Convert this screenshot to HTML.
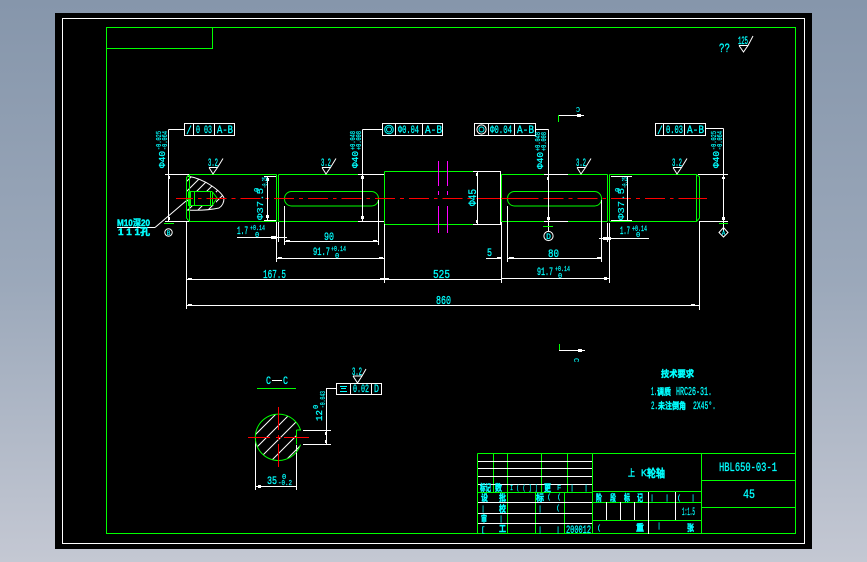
<!DOCTYPE html>
<html><head><meta charset="utf-8"><style>
html,body{margin:0;padding:0;width:867px;height:562px;overflow:hidden;background:#8a99ad}
svg{display:block;position:absolute;left:0;top:0}
.l{fill:none;stroke-width:1;shape-rendering:crispEdges}
.a{fill:none;stroke-width:1}
.w{stroke:#fff}.g{stroke:#00ff00}.r{stroke:#ff0000}.m{stroke:#ff00ff}.c{stroke:#00ffff}
text{fill:#00ffff;stroke:#00ffff;stroke-width:.3;font-family:"Liberation Mono","Noto Sans CJK SC",monospace;font-size:11px}
.b{font-family:"Liberation Sans","Noto Sans CJK SC",sans-serif;font-weight:bold;font-size:9px;stroke-width:.4}
.s{font-size:7px;stroke-width:.2}
</style></head><body>
<svg width="867" height="562" viewBox="0 0 867 562" xmlns="http://www.w3.org/2000/svg">
<defs>
<linearGradient id="bg" x1="0" y1="0" x2="0" y2="1"><stop offset="0" stop-color="#8696ab"/><stop offset="0.5" stop-color="#9ba8ba"/><stop offset="1" stop-color="#c4c8d3"/></linearGradient>
<clipPath id="hc"><path d="M187,176 Q200,178 212,186 Q222,193 224,198 Q224,205 219,208 Q205,211 187,210 Z"/></clipPath>
<clipPath id="cc"><path d="M300.5,430 A23.2,23.2 0 1 0 300.5,444.6 L296.5,444.6 V430 Z"/></clipPath>
</defs>
<rect width="867" height="562" fill="url(#bg)"/>
<rect x="55" y="13" width="757" height="536" fill="#000"/>
<rect x="62.5" y="18.5" width="742" height="525" class="l w"/>
<rect x="106.5" y="27.5" width="689" height="506" class="l g"/>
<path class="l g" d="M106.5,48.5H212.5V27.5"/>

<!-- hatch -->
<g clip-path="url(#hc)" class="a w">
<path d="M180,188L240,128M180,198L240,138M180,208L240,148M180,218L240,158M180,228L240,168M180,238L240,178M180,248L240,188"/>
</g>
<rect x="190" y="192" width="26" height="13" fill="#000"/>
<path class="a w" d="M187,176 Q200,178 212,186 Q222,193 224,198 Q224,205 219,208 Q205,211 187,210"/>

<!-- shaft green -->
<g class="l g">
<path d="M186.5,177.5L189.5,174.5H276.5M186.5,177V218L189,221.5H276.5M189.5,174.5V221.5M276.5,174.5V221.5M278.5,174.5V221.5M278.5,174.5H358M278.5,221.5H358"/>
<path d="M384.5,171.5H473M384.5,224.5H473M384.5,171.5V224.5M501.5,174.5V221.5M501.5,174.5H544M568,174.5H607.5M501.5,221.5H544M568,221.5H607.5M607.5,174.5V221.5M609.5,174.5V221.5M609.5,174.5H696.5M609.5,221.5H696.5M696.5,174.5V221.5"/>
<path d="M188.5,191.5V206M190.5,191.5V206M194.5,192V205M190,191.5H212M190,205.5H212M210.5,191.5V205.5M212.5,191.5V205.5"/>
</g>
<path class="a g" d="M212.5,192L217,198L212.5,205"/>
<path class="a g" d="M696.5,174.5L699.5,177V218L696.5,221.5"/>
<rect x="284.5" y="191.5" width="94" height="14.5" rx="7" class="a g"/>
<rect x="507.5" y="191.5" width="94" height="14.5" rx="7" class="a g"/>

<!-- centre line -->
<path class="l r" d="M176,198.5H708" stroke-dasharray="20 5 3.7 5" stroke-dashoffset="3"/>
<path class="l r" d="M481,198.5H537M683,198.5H707"/>
<path class="l m" d="M438.5,161V186M438.5,191V195M438.5,206V233M447.5,161V186M447.5,191V195M447.5,206V233"/>

<!-- white dims -->
<g class="l w">
<path d="M165,174.5H189M165,221.5H189M168.5,129.5V221M184,129.5H168.5"/>
<path d="M264,176.5H276M264,220.5H276M267.5,176V220"/>
<path d="M358,174.5H384M358,221.5H384M362.5,129.5V221M382,129.5H362.5"/>
<path d="M473,171.5H500.5V224.5H473M477.5,172V224"/>
<path d="M544,174.5H568M544,221.5H568M548.5,129.5V226M535.5,129.5H548.5"/>
<path d="M611,176.5H632M611,220.5H632M627.5,176V220"/>
<path d="M698,174.5H728M699,221.5H728M723.5,128.5V232M705.5,128.5H723.5"/>
<path d="M186.5,221V309M276.5,222V262M278.5,222V242M284.5,206V245M378.5,200V245M384.5,224V283M501.5,222V283M507.5,206V262M601.5,200V262M607.5,223V242M609.5,223V283M699.5,222V310"/>
<path d="M284,241.5H378M237,237.5H287M276,258.5H384M186,279.5H384M186,305.5H699M384,279.5H501M486,258.5H501M507,258.5H601M501,278.5H609M599,238.5H649"/>
<path d="M558,115.5H584M559,350.5H585"/>
<path d="M117,227.5H155"/>
<!-- tolerance boxes -->
<rect x="184.5" y="123.5" width="50" height="12"/><path d="M193.5,124V135M214.5,124V135"/>
<rect x="382.5" y="123.5" width="60" height="12"/><path d="M395.5,124V135M422.5,124V135"/>
<rect x="474.5" y="123.5" width="61" height="12"/><path d="M488.5,124V135M514.5,124V135"/>
<rect x="655.5" y="123.5" width="50" height="12"/><path d="M663.5,124V135M684.5,124V135"/>
<rect x="336.5" y="383.5" width="45" height="11"/><path d="M350.5,384V394M371.5,384V394"/>
<path d="M336,388.5H326.5V444M303,430.5H331M303,444.5H331M255.5,438V490M296.5,445V490M255,486.5H297"/>
</g>
<path class="l c" d="M341,388.5H346M340,386.5H347M340,391.5H347"/>
<!-- dim ticks -->
<g fill="#fff">
<rect x="168" y="176" width="2" height="3"/><rect x="168" y="217" width="2" height="3"/>
<rect x="266" y="178" width="3" height="3"/><rect x="266" y="215" width="3" height="3"/>
<rect x="286" y="240" width="4" height="2"/><rect x="373" y="240" width="4" height="2"/>
<rect x="278" y="257" width="4" height="2"/><rect x="379" y="257" width="4" height="2"/>
<rect x="188" y="278" width="4" height="2"/><rect x="380" y="278" width="4" height="2"/>
<rect x="188" y="304" width="4" height="2"/><rect x="691" y="304" width="4" height="2"/>
<rect x="271" y="236" width="6" height="3"/><rect x="384" y="278" width="5" height="2"/><rect x="497" y="257" width="5" height="2"/>
<rect x="509" y="257" width="5" height="2"/><rect x="597" y="257" width="4" height="2"/><rect x="604" y="277" width="3" height="3"/>
<rect x="603" y="237" width="8" height="3"/><rect x="577" y="114" width="4" height="3"/><rect x="578" y="349" width="4" height="3"/>
<rect x="547" y="177" width="2" height="3"/><rect x="547" y="217" width="3" height="3"/><rect x="361" y="176" width="3" height="3"/><rect x="361" y="216" width="3" height="3"/>
<rect x="476" y="173" width="2" height="3"/><rect x="476" y="220" width="2" height="3"/>
<rect x="722" y="177" width="3" height="2"/><rect x="722" y="217" width="3" height="3"/>
<rect x="325" y="432" width="2" height="3"/><rect x="325" y="440" width="2" height="3"/><rect x="258" y="485" width="3" height="3"/>
</g>
<path class="a w" d="M155,227.5L186,201"/>
<path class="l g" d="M558.5,115V122M559.5,344V350M164,223.5H174M543,226.5H553M719,223.5H728M257,388.5H296"/>

<!-- datum marks -->
<g class="a w">
<circle cx="168.5" cy="232.5" r="3.7"/><circle cx="548.5" cy="236" r="4.6"/>
<path d="M548.5,227V231M723.5,227V232"/>
<path d="M719,232.5L723.5,227.5L728,232.5L723.5,237Z"/>
<circle cx="481.5" cy="129.5" r="4.6"/>
</g>
<g class="a c">
<circle cx="389" cy="129.5" r="4.3"/><circle cx="389" cy="129.5" r="2.5"/>
<circle cx="481.5" cy="129.5" r="2.5"/>
<path d="M191,125.5L187,134M662,125.5L658,134"/>
</g>

<!-- roughness -->
<g class="a w">
<path d="M209,167.5H217.5L213,174L209,167.5M217.5,167.5L223,158.5"/>
<path d="M322,167.5H330.5L326,174L322,167.5M330.5,167.5L336,158.5"/>
<path d="M577,167.5H585.5L581,174L577,167.5M585.5,167.5L591,158.5"/>
<path d="M673,167.5H681.5L677,174L673,167.5M681.5,167.5L687,158.5"/>
<path d="M739,45.5H748L743.5,52L739,45.5M748,45.5L753,36"/>
<path d="M353,376H362L357.5,383L353,376M362,376L366,369"/>
</g>

<!-- section circle -->
<g clip-path="url(#cc)" class="a w">
<path d="M250,428L310,368M250,440L310,380M250,454L310,394M250,468L310,408M250,482L310,422M250,496L310,436"/>
</g>
<path class="a g" d="M300.5,430 A23.2,23.2 0 1 0 300.5,444.6"/>
<path class="l g" d="M296.5,430V444.5M296.5,430H301"/>
<path class="l r" d="M248,437.5H270M276,437.5H281M284,437.5H309M278.5,407V430M278.5,435V440M278.5,444V467"/>

<!-- dimension text -->
<text x="208" y="166" textLength="10" lengthAdjust="spacingAndGlyphs">3.2</text>
<text x="321" y="166" textLength="10" lengthAdjust="spacingAndGlyphs">3.2</text>
<text x="576" y="166" textLength="10" lengthAdjust="spacingAndGlyphs">3.2</text>
<text x="672" y="166" textLength="10" lengthAdjust="spacingAndGlyphs">3.2</text>
<text x="738" y="44" textLength="10" lengthAdjust="spacingAndGlyphs">125</text>
<text x="719" y="52" textLength="11" lengthAdjust="spacingAndGlyphs" style="font-size:13px">??</text>
<text x="352" y="375" textLength="10" lengthAdjust="spacingAndGlyphs">3.2</text>

<text x="196" y="133" textLength="16" lengthAdjust="spacingAndGlyphs">0 03</text>
<text x="217" y="133" textLength="16" lengthAdjust="spacingAndGlyphs">A-B</text>
<text x="398" y="133" textLength="21" lengthAdjust="spacingAndGlyphs">Φ0.04</text>
<text x="425" y="133" textLength="17" lengthAdjust="spacingAndGlyphs">A-B</text>
<text x="490" y="133" textLength="22" lengthAdjust="spacingAndGlyphs">Φ0.04</text>
<text x="517" y="133" textLength="17" lengthAdjust="spacingAndGlyphs">A-B</text>
<text x="666" y="133" textLength="17" lengthAdjust="spacingAndGlyphs">0.03</text>
<text x="687" y="133" textLength="17" lengthAdjust="spacingAndGlyphs">A-B</text>
<text x="353" y="392" textLength="16" lengthAdjust="spacingAndGlyphs">0.02</text>
<text x="374" y="392" textLength="5" lengthAdjust="spacingAndGlyphs">D</text>

<text transform="translate(165,168) rotate(-90)" textLength="17" lengthAdjust="spacingAndGlyphs" style="font-size:9px">Φ40</text>
<text class="s" transform="translate(161,150) rotate(-90)" textLength="19" lengthAdjust="spacingAndGlyphs">-0.025</text>
<text class="s" transform="translate(167,150) rotate(-90)" textLength="19" lengthAdjust="spacingAndGlyphs">-0.064</text>
<text transform="translate(358,168) rotate(-90)" textLength="17" lengthAdjust="spacingAndGlyphs" style="font-size:9px">Φ40</text>
<text class="s" transform="translate(355,150) rotate(-90)" textLength="19" lengthAdjust="spacingAndGlyphs">+0.048</text>
<text class="s" transform="translate(361,150) rotate(-90)" textLength="19" lengthAdjust="spacingAndGlyphs">+0.008</text>
<text transform="translate(543,169) rotate(-90)" textLength="17" lengthAdjust="spacingAndGlyphs" style="font-size:9px">Φ40</text>
<text class="s" transform="translate(540,151) rotate(-90)" textLength="19" lengthAdjust="spacingAndGlyphs">+0.048</text>
<text class="s" transform="translate(546,151) rotate(-90)" textLength="19" lengthAdjust="spacingAndGlyphs">+0.008</text>
<text transform="translate(719,168) rotate(-90)" textLength="17" lengthAdjust="spacingAndGlyphs" style="font-size:9px">Φ40</text>
<text class="s" transform="translate(716,150) rotate(-90)" textLength="19" lengthAdjust="spacingAndGlyphs">-0.025</text>
<text class="s" transform="translate(722,150) rotate(-90)" textLength="19" lengthAdjust="spacingAndGlyphs">-0.064</text>

<text transform="translate(263,220) rotate(-90)" textLength="32" lengthAdjust="spacingAndGlyphs" style="font-size:9px;stroke-width:.15">Φ37.5</text>
<text class="s" transform="translate(259,192) rotate(-90)">0</text>
<text class="s" transform="translate(267,188) rotate(-90)" textLength="11" lengthAdjust="spacingAndGlyphs">-0.25</text>
<text transform="translate(624,220) rotate(-90)" textLength="32" lengthAdjust="spacingAndGlyphs" style="font-size:9px;stroke-width:.15">Φ37.5</text>
<text class="s" transform="translate(620,192) rotate(-90)">0</text>
<text class="s" transform="translate(627,188) rotate(-90)" textLength="11" lengthAdjust="spacingAndGlyphs">-0.25</text>
<text transform="translate(476,206) rotate(-90)" textLength="17" lengthAdjust="spacingAndGlyphs">Φ45</text>
<text transform="translate(322,421) rotate(-90)" textLength="11" lengthAdjust="spacingAndGlyphs" style="font-size:9px">12</text>
<text class="s" transform="translate(318,409) rotate(-90)">0</text>
<text class="s" transform="translate(325,408) rotate(-90)" textLength="17" lengthAdjust="spacingAndGlyphs">-0.043</text>
<text transform="translate(580,107) rotate(180)" style="font-size:7px;stroke-width:.1">C</text>
<text transform="translate(574,358) rotate(90)" style="font-size:7px;stroke-width:.1">C</text>

<text x="237" y="234" textLength="11" lengthAdjust="spacingAndGlyphs">1.7</text>
<text class="s" x="250" y="230" textLength="15" lengthAdjust="spacingAndGlyphs">+0.14</text>
<text class="s" x="255" y="237">0</text>
<text x="324" y="240" textLength="10" lengthAdjust="spacingAndGlyphs">90</text>
<text x="313" y="255" textLength="17" lengthAdjust="spacingAndGlyphs">91.7</text>
<text class="s" x="331" y="251" textLength="15" lengthAdjust="spacingAndGlyphs">+0.14</text>
<text class="s" x="335" y="258">0</text>
<text x="263" y="278" textLength="23" lengthAdjust="spacingAndGlyphs" style="font-size:12px">167.5</text>
<text x="433" y="278" textLength="17" lengthAdjust="spacingAndGlyphs" style="font-size:12px">525</text>
<text x="436" y="304" textLength="15" lengthAdjust="spacingAndGlyphs" style="font-size:12px">860</text>
<text x="487" y="256" textLength="5" lengthAdjust="spacingAndGlyphs">5</text>
<text x="548" y="257" textLength="11" lengthAdjust="spacingAndGlyphs">80</text>
<text x="537" y="275" textLength="16" lengthAdjust="spacingAndGlyphs">91.7</text>
<text class="s" x="555" y="271" textLength="15" lengthAdjust="spacingAndGlyphs">+0.14</text>
<text class="s" x="558" y="278">0</text>
<text x="620" y="234" textLength="10" lengthAdjust="spacingAndGlyphs">1.7</text>
<text class="s" x="632" y="231" textLength="15" lengthAdjust="spacingAndGlyphs" style="font-size:8px">+0.14</text>
<text class="s" x="636" y="237">0</text>
<text x="267" y="484" textLength="10" lengthAdjust="spacingAndGlyphs">35</text>
<text class="s" x="282" y="479">0</text>
<text class="s" x="278" y="485" textLength="14" lengthAdjust="spacingAndGlyphs">-0.2</text>
<text x="266" y="384" textLength="5" lengthAdjust="spacingAndGlyphs">C</text>
<text x="283" y="384" textLength="5" lengthAdjust="spacingAndGlyphs">C</text>
<path class="l w" d="M272,380.5H282"/>
<text class="s" x="168.5" y="235" text-anchor="middle" style="font-size:6px">B</text>
<text x="548.5" y="239" text-anchor="middle" style="font-size:8px">D</text>
<text x="723.5" y="235" text-anchor="middle" style="font-size:6px;stroke-width:.1">A</text>
<text x="117" y="226" textLength="33" lengthAdjust="spacingAndGlyphs" class="b">M10深20</text>
<text x="118" y="235" textLength="32" lengthAdjust="spacingAndGlyphs" class="b">1 1 1孔</text>

<!-- tech req -->
<text x="661" y="377" textLength="33" lengthAdjust="spacingAndGlyphs" class="b">技术要求</text>
<text x="651" y="395" textLength="6" lengthAdjust="spacingAndGlyphs" style="font-size:12px">1.</text>
<text x="657" y="395" textLength="14" lengthAdjust="spacingAndGlyphs" class="b">调质</text>
<text x="676" y="395" textLength="36" lengthAdjust="spacingAndGlyphs" style="font-size:12px">HRC26-31.</text>
<text x="651" y="409" textLength="7" lengthAdjust="spacingAndGlyphs">2.</text>
<text x="658" y="409" textLength="28" lengthAdjust="spacingAndGlyphs" class="b">未注倒角</text>
<text x="693" y="409" textLength="23" lengthAdjust="spacingAndGlyphs">2X45°.</text>

<!-- title block -->
<g class="l g">
<path d="M477.5,453.5H795M477.5,453.5V534M493.5,453.5V492M507.5,453.5V534M541.5,453.5V492M567.5,453.5V492M592.5,453.5V534M477,492.5H592M535.5,492V534M564.5,492V534"/>
<path d="M592,491.5H701M592,502.5H701M592,520.5H701M701.5,453.5V534M701,480.5H795M701,507.5H795"/>
</g>
<g class="l w">
<path d="M478,461.5H592M478,468.5H592M478,476.5H592M478,484.5H592M478,502.5H592M478,513.5H592M478,523.5H592"/>
<path d="M606.5,502V520M620.5,502V520M634.5,502V520M648.5,492V534M675.5,492V520"/>
</g>
<text x="628" y="476" textLength="7" lengthAdjust="spacingAndGlyphs" class="b" style="font-weight:normal">上</text>
<text x="641" y="476" textLength="6" lengthAdjust="spacingAndGlyphs" class="b" style="font-weight:normal">K</text>
<text x="647" y="477" textLength="18" lengthAdjust="spacingAndGlyphs" class="b" style="font-size:11px">轮轴</text>
<text x="719" y="471" textLength="58" lengthAdjust="spacingAndGlyphs" style="font-size:13px">HBL650-03-1</text>
<text x="743" y="498" textLength="12" lengthAdjust="spacingAndGlyphs" style="font-size:13px">45</text>
<text x="682" y="515" textLength="13" lengthAdjust="spacingAndGlyphs">1:1.5</text>
<text x="566" y="533" textLength="25" lengthAdjust="spacingAndGlyphs">200012</text>
<g>
<text class="b" x="480" y="491" textLength="11" lengthAdjust="spacingAndGlyphs">标记</text>
<text class="b" x="495" y="491" textLength="7" lengthAdjust="spacingAndGlyphs">数</text>
<text class="s" x="510" y="490" textLength="28" lengthAdjust="spacingAndGlyphs">I ( ( ] ]</text>
<text class="b" x="544" y="491" textLength="7" lengthAdjust="spacingAndGlyphs">更</text>
<text class="s" x="557" y="490">F</text>
<text class="s" x="570" y="490">|</text>
<text class="s" x="584" y="490">|</text>
<text class="b" x="481" y="501" textLength="7" lengthAdjust="spacingAndGlyphs">设</text>
<text class="b" x="499" y="501" textLength="7" lengthAdjust="spacingAndGlyphs">批</text>
<text class="b" x="536" y="501" textLength="8" lengthAdjust="spacingAndGlyphs">标</text>
<text class="s" x="547" y="499">(</text>
<text class="s" x="557" y="499">(</text>
<text class="s" x="481" y="511">|</text>
<text class="b" x="499" y="512" textLength="7" lengthAdjust="spacingAndGlyphs">校</text>
<text class="s" x="538" y="511">|</text>
<text class="s" x="556" y="510">(</text>
<text class="b" x="481" y="522" textLength="6" lengthAdjust="spacingAndGlyphs">审</text>
<text class="s" x="499" y="521">|</text>
<text class="s" x="481" y="532">[</text>
<text class="b" x="499" y="532" textLength="7" lengthAdjust="spacingAndGlyphs">工</text>
<text class="s" x="538" y="532">|</text>
<text class="s" x="556" y="532">|</text>
<text class="b" x="596" y="501" textLength="6" lengthAdjust="spacingAndGlyphs">阶</text>
<text class="b" x="610" y="501" textLength="6" lengthAdjust="spacingAndGlyphs">段</text>
<text class="b" x="624" y="501" textLength="6" lengthAdjust="spacingAndGlyphs">标</text>
<text class="b" x="637" y="501" textLength="6" lengthAdjust="spacingAndGlyphs">记</text>
<text class="s" x="650" y="500">|</text>
<text class="s" x="665" y="500">|</text>
<text class="s" x="677" y="500">(</text>
<text class="s" x="691" y="500">|</text>
<text class="s" x="597" y="530">(</text>
<text class="b" x="636" y="531" textLength="8" lengthAdjust="spacingAndGlyphs">重</text>
<text class="s" x="657" y="528">|</text>
<text class="b" x="687" y="531" textLength="7" lengthAdjust="spacingAndGlyphs">张</text>
</g>
</svg>
</body></html>
